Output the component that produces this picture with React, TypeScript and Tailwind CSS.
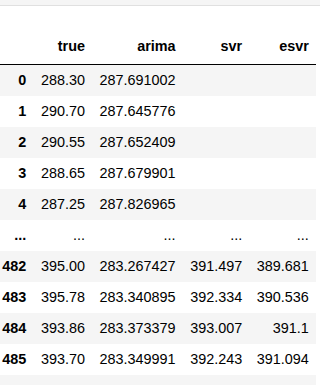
import React from 'react';

const columns = ['true', 'arima', 'svr', 'esvr'];

const rows: [string, string, string, string, string][] = [
  ['0', '288.30', '287.691002', '', ''],
  ['1', '290.70', '287.645776', '', ''],
  ['2', '290.55', '287.652409', '', ''],
  ['3', '288.65', '287.679901', '', ''],
  ['4', '287.25', '287.826965', '', ''],
  ['...', '...', '...', '...', '...'],
  ['482', '395.00', '283.267427', '391.497', '389.681'],
  ['483', '395.78', '283.340895', '392.334', '390.536'],
  ['484', '393.86', '283.373379', '393.007', '391.1'],
  ['485', '393.70', '283.349991', '392.243', '391.094'],
  ['486', '394.98', '283.375604', '392.262', '391.414'],
];

export default function App() {
  return (
    <div className="w-[320px] h-[385px] overflow-hidden bg-white text-black font-['Liberation_Sans',Arial,sans-serif] text-[14.4px]">
      <div className="h-[6px] bg-[#f5f5f5] border-b border-[#e0e0e0]" />
      <div className="pt-[24px]">
        <table className="ml-[-5px] border-separate border-spacing-0">
          <thead>
            <tr className="h-[35px]">
              <th className="px-[7.3px] border-b border-black" />
              {columns.map((c) => (
                <th key={c} className="px-[7.3px] text-right align-middle font-bold border-b border-black">
                  {c}
                </th>
              ))}
            </tr>
          </thead>
          <tbody>
            {rows.map((r, i) => (
              <tr key={r[0]} className={`h-[31px] ${i % 2 === 0 ? 'bg-[#f5f5f5]' : 'bg-white'}`}>
                <th className="px-[7.3px] py-0 text-right align-middle font-bold">{r[0]}</th>
                {r.slice(1).map((v, j) => (
                  <td key={j} className="px-[7.3px] py-0 text-right align-middle whitespace-nowrap">
                    {v}
                  </td>
                ))}
              </tr>
            ))}
          </tbody>
        </table>
      </div>
    </div>
  );
}
